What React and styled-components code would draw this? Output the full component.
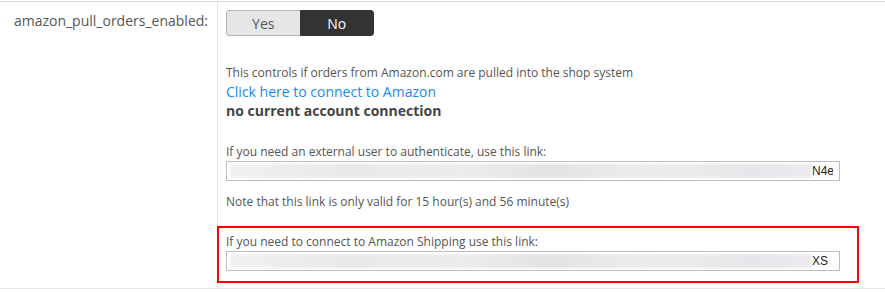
import React from 'react';
import styled, {createGlobalStyle} from 'styled-components';

const GlobalStyle = createGlobalStyle`
  html, body {
    margin: 0;
    padding: 0;
    background: #fff;
  }
  body {
    font-family: "Open Sans", "Liberation Sans", Arial, sans-serif;
    color: #555;
  }
`;

const LinkField = ({tail}) => (
  <Field>
    <Blur />
    <Tail>{tail}</Tail>
  </Field>
);

export default function App() {
  return (
    <Page>
      <GlobalStyle />
      <Row>
        <LabelCell>amazon_pull_orders_enabled:</LabelCell>
        <ValueCell>
          <Toggle>
            <ToggleOption>Yes</ToggleOption>
            <ToggleOption active>No</ToggleOption>
          </Toggle>
          <Info>
            <Hint>This controls if orders from Amazon.com are pulled into the shop system</Hint>
            <ConnectLink href="#">Click here to connect to Amazon</ConnectLink>
            <Status>no current account connection</Status>
          </Info>
          <Section>
            <Hint>If you need an external user to authenticate, use this link:</Hint>
            <LinkField tail="N4e" />
          </Section>
          <Note>Note that this link is only valid for 15 hour(s) and 56 minute(s)</Note>
          <Highlight>
            <Hint>If you need to connect to Amazon Shipping use this link:</Hint>
            <LinkField tail="XS" />
          </Highlight>
        </ValueCell>
      </Row>
    </Page>
  );
}

const Page = styled.div`
  padding-top: 1px;
  height: 293px;
  box-sizing: border-box;
`;

const Row = styled.div`
  display: grid;
  grid-template-columns: 218px 1fr;
  border-top: 1px solid #dedede;
  border-bottom: 1px solid #e6e6e6;
`;

const LabelCell = styled.div`
  border-right: 1px solid #e6e6e6;
  text-align: right;
  padding: 9px 9px 0 0;
  font-size: 14px;
  line-height: 20px;
  color: #555;
`;

const ValueCell = styled.div`
  padding: 8px 0 5px 0;
  display: flex;
  flex-direction: column;
  font-size: 12px;
`;

const Toggle = styled.div`
  display: flex;
  width: 148px;
  height: 26px;
  margin-left: 8px;
  border-radius: 3px;
  overflow: hidden;
  box-sizing: border-box;
`;

const ToggleOption = styled.div`
  flex: 1;
  display: flex;
  align-items: center;
  justify-content: center;
  font-size: 14px;
  box-sizing: border-box;
  background: ${({active}) => (active ? '#333' : '#e6e6e6')};
  color: ${({active}) => (active ? '#fff' : '#555')};
  border: 1px solid ${({active}) => (active ? '#333' : '#b5b5b5')};
  border-right: ${({active}) => (active ? '1px solid #333' : 'none')};
  border-radius: ${({active}) => (active ? '0 3px 3px 0' : '3px 0 0 3px')};
`;

const Info = styled.div`
  display: flex;
  flex-direction: column;
  margin: 27px 0 0 8px;
  line-height: 19px;
`;

const Hint = styled.div`
  font-size: 12px;
  line-height: 19px;
  color: #555;
`;

const ConnectLink = styled.a`
  font-size: 14px;
  color: #1a8ae6;
  text-decoration: none;
`;

const Status = styled.div`
  font-size: 14px;
  font-weight: 700;
  color: #444;
`;

const Section = styled.div`
  margin: 22px 0 0 8px;
`;

const Note = styled.div`
  margin: 11px 0 0 8px;
  font-size: 12px;
  line-height: 19px;
`;

const Highlight = styled.div`
  margin: 15px 0 0 -1px;
  width: 642px;
  height: 57px;
  box-sizing: border-box;
  border: 2px solid #f00;
  padding: 4px 7px 0;
`;

const Field = styled.div`
  display: flex;
  align-items: center;
  width: 614px;
  height: 20px;
  box-sizing: border-box;
  border: 1px solid #bdbdbd;
  padding: 2px 6px 2px 3px;
  overflow: hidden;
`;

const Blur = styled.div`
  flex: 1;
  align-self: stretch;
  background: linear-gradient(
    to right,
    #f1f1f1 0%,
    #e9e9e9 20%,
    #ececec 40%,
    #e3e3e3 55%,
    #ececec 70%,
    #e8e6ea 90%,
    #eceaee 100%
  );
  filter: blur(1px);
`;

const Tail = styled.span`
  font-family: "Liberation Sans", Arial, sans-serif;
  font-size: 12px;
  color: #222;
  width: 21px;
  white-space: nowrap;
  overflow: hidden;
`;
